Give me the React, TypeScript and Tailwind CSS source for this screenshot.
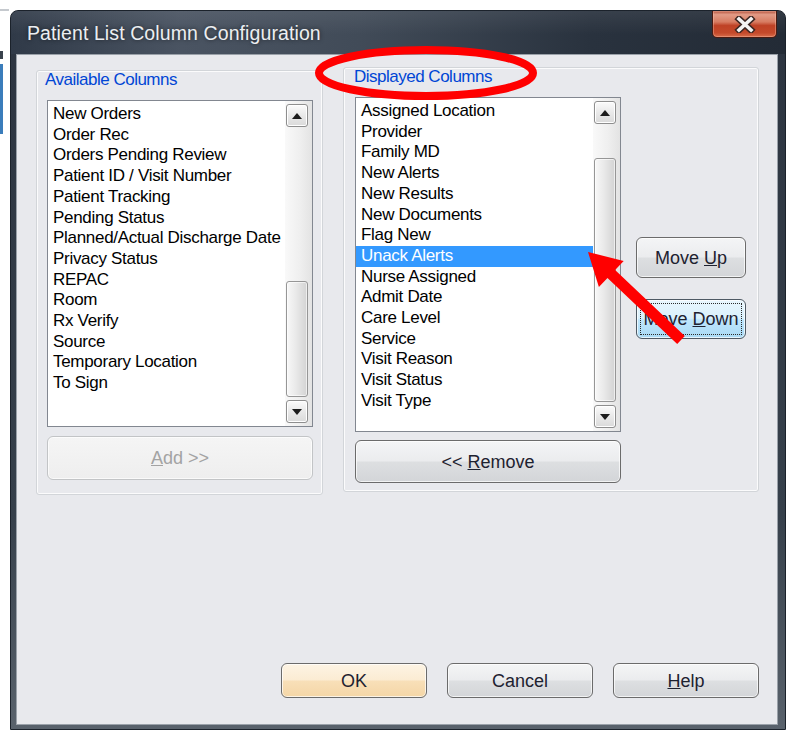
import type { ReactNode } from "react"

const availableColumns = [
  "New Orders",
  "Order Rec",
  "Orders Pending Review",
  "Patient ID / Visit Number",
  "Patient Tracking",
  "Pending Status",
  "Planned/Actual Discharge Date",
  "Privacy Status",
  "REPAC",
  "Room",
  "Rx Verify",
  "Source",
  "Temporary Location",
  "To Sign",
]

const displayedColumns = [
  "Assigned Location",
  "Provider",
  "Family MD",
  "New Alerts",
  "New Results",
  "New Documents",
  "Flag New",
  "Unack Alerts",
  "Nurse Assigned",
  "Admit Date",
  "Care Level",
  "Service",
  "Visit Reason",
  "Visit Status",
  "Visit Type",
]

type ButtonVariant = "normal" | "default" | "focused" | "disabled"

const buttonStyles: Record<ButtonVariant, string> = {
  normal:
    "border-[#6b6b6b] text-[#1e2230] bg-[linear-gradient(to_bottom,#f4f5f6_0%,#ebecee_48%,#dddfe1_52%,#d3d5d8_100%)]",
  default:
    "border-[#6b6b6b] text-[#1e2230] bg-[linear-gradient(to_bottom,#fdf4e4_0%,#fbecd3_48%,#f8dfb8_52%,#f4d6a6_100%)]",
  focused:
    "border-[#4e5964] text-[#1e2230] bg-[linear-gradient(to_bottom,#e8f6fd_0%,#d9f0fc_48%,#bee6fd_52%,#a9daf5_100%)]",
  disabled: "border-[#c2c4c6] text-[#a3a3a3] bg-[linear-gradient(to_bottom,#f5f5f5,#eeeeee)]",
}

function Button({
  children,
  variant = "normal",
  className = "",
}: {
  children: ReactNode
  variant?: ButtonVariant
  className?: string
}) {
  return (
    <div
      className={`flex shrink-0 rounded-[6px] border shadow-[inset_0_0_0_1px_rgba(255,255,255,0.7)] text-[18px] leading-none ${buttonStyles[variant]} ${className}`}
    >
      {variant === "focused" ? (
        <div className="m-[3px] flex flex-1 items-center justify-center overflow-hidden whitespace-nowrap border border-dotted border-[#2b2b2b]">
          {children}
        </div>
      ) : (
        <div className="flex flex-1 items-center justify-center whitespace-nowrap">{children}</div>
      )}
    </div>
  )
}

function ScrollArrow({ dir }: { dir: "up" | "down" }) {
  return (
    <div className="flex h-[23px] w-[22px] shrink-0 items-center justify-center rounded-[3px] border border-[#8e8e8e] bg-[linear-gradient(to_bottom,#fbfbfb,#e9e9e9_50%,#dadada)] shadow-[inset_0_0_0_1px_#ffffff]">
      <svg width="10" height="6" viewBox="0 0 10 6">
        <path d={dir === "up" ? "M0 6L5 0L10 6Z" : "M0 0L5 6L10 0Z"} fill="#1c1c1c" />
      </svg>
    </div>
  )
}

function ScrollBar({ thumb }: { thumb: string }) {
  return (
    <div className="flex w-[27px] shrink-0 flex-col pl-[1px] pt-[3px] pb-[3px] bg-[linear-gradient(to_right,#f9f9f9,#efefef_55%,#e3e3e3)]">
      <ScrollArrow dir="up" />
      <div
        className={`w-[22px] rounded-[3px] border border-[#969696] bg-[linear-gradient(to_right,#f8f8f8,#e9e9e9_45%,#d3d3d3)] shadow-[inset_0_0_0_1px_rgba(255,255,255,0.6)] ${thumb}`}
      />
      <div className="flex-1" />
      <ScrollArrow dir="down" />
    </div>
  )
}

function ListBox({
  items,
  selected,
  thumb,
  className,
}: {
  items: string[]
  selected?: string
  thumb: string
  className: string
}) {
  return (
    <div className={`flex border border-[#828790] bg-white ${className}`}>
      <div className="flex-1 pt-[3px] text-[17px] leading-[20.7px] tracking-[-0.3px] text-black">
        {items.map((item) => (
          <div
            key={item}
            className={item === selected ? "bg-[#3399ff] pl-[5px] text-white" : "pl-[5px]"}
          >
            {item}
          </div>
        ))}
      </div>
      <ScrollBar thumb={thumb} />
    </div>
  )
}

function GroupLabel({ children, className }: { children: ReactNode; className: string }) {
  return (
    <div className={`h-[18px] text-[17px] leading-[18px] tracking-[-0.5px] text-[#0046d5] ${className}`}>
      {children}
    </div>
  )
}

function CloseButton() {
  return (
    <div className="mr-[8px] flex h-[27px] w-[65px] items-center justify-center rounded-b-[5px] border border-t-0 border-[#4a1a10] shadow-[inset_0_0_0_1px_rgba(255,210,190,0.35)] bg-[linear-gradient(to_bottom,#b4513c_0%,#e19b86_14%,#d77c62_42%,#bf4226_56%,#c44a2b_84%,#d86c4a_100%)]">
      <svg width="22" height="17" viewBox="0 0 22 17">
        <path d="M5 3L17 14M17 3L5 14" stroke="#3b2622" strokeWidth="6.5" strokeLinecap="square" />
        <path d="M5 3L17 14M17 3L5 14" stroke="#f4f4f4" strokeWidth="3.6" strokeLinecap="square" />
      </svg>
    </div>
  )
}

export default function App() {
  return (
    <div className="relative flex h-[730px] w-[786px] overflow-hidden bg-white font-['Liberation_Sans',Arial,sans-serif]">
      {/* edge of the app window sitting behind the dialog */}
      <div className="flex w-[10px] shrink-0 flex-col">
        <div className="mt-[9px] h-[2px] w-[9px] bg-[#c5c9ce]" />
        <div className="mt-[40px] h-[8px] w-[3px] bg-[#39424d]" />
        <div className="mt-[5px] h-[70px] w-[3px] bg-[#3b7dbb]" />
      </div>

      <div className="mt-[10px] flex h-[720px] w-[776px] flex-col rounded-t-[8px] border border-[#1b222b] bg-[linear-gradient(to_bottom,#2c3440,#36404b_70%,#59626c)]">
        {/* title bar */}
        <div className="flex h-[43px] shrink-0 items-start justify-between rounded-t-[7px] bg-[linear-gradient(to_bottom,rgba(255,255,255,0.07),rgba(255,255,255,0)_55%),linear-gradient(to_right,#303a48_0%,#4a5462_22%,#414b58_45%,#29323e_75%,#232b36_100%)]">
          <div className="pl-[16px] pt-[10px] text-[19.5px] leading-[24px] tracking-[0.1px] text-[#eceef1] [text-shadow:0_0_4px_rgba(0,0,0,0.6)]">
            Patient List Column Configuration
          </div>
          <CloseButton />
        </div>

        {/* client area */}
        <div className="flex flex-1 pl-[5px] pr-[7px] pb-[4px]">
          <div className="flex flex-1 flex-col border border-[#9aa1a9] bg-[#e8e9ed]">
            <div className="flex items-start gap-[20px] pl-[19px]">
              {/* Available Columns */}
              <div className="mt-[15px] flex h-[425px] w-[287px] flex-col rounded-[3px] border border-[#d2d5d9] shadow-[inset_0_0_0_1px_rgba(255,255,255,0.8)]">
                <GroupLabel className="ml-[8px]">Available Columns</GroupLabel>
                <ListBox
                  items={availableColumns}
                  thumb="mt-[154px] h-[116px]"
                  className="ml-[10px] mt-[11px] h-[327px] w-[266px]"
                />
                <Button variant="disabled" className="ml-[10px] mt-[9px] h-[44px] w-[266px]">
                  <span>
                    <u>A</u>dd &gt;&gt;
                  </span>
                </Button>
              </div>

              {/* Displayed Columns */}
              <div className="mt-[12px] flex h-[425px] w-[416px] flex-col rounded-[3px] border border-[#d2d5d9] shadow-[inset_0_0_0_1px_rgba(255,255,255,0.8)]">
                <GroupLabel className="ml-[10px]">Displayed Columns</GroupLabel>
                <div className="ml-[11px] mt-[11px] flex gap-[15px]">
                  <div className="flex flex-col">
                    <ListBox
                      items={displayedColumns}
                      selected="Unack Alerts"
                      thumb="mt-[34px] h-[244px]"
                      className="h-[335px] w-[266px]"
                    />
                    <Button className="mt-[8px] h-[43px] w-[266px]">
                      <span>
                        &lt;&lt; <u>R</u>emove
                      </span>
                    </Button>
                  </div>
                  <div className="flex flex-col gap-[21px] pt-[140px]">
                    <Button className="h-[41px] w-[110px]">
                      <span>
                        Move <u>U</u>p
                      </span>
                    </Button>
                    <Button variant="focused" className="h-[40px] w-[110px]">
                      <span>
                        Move <u>D</u>own
                      </span>
                    </Button>
                  </div>
                </div>
              </div>
            </div>

            <div className="flex-1" />

            <div className="flex justify-end gap-[20px] pr-[18px] pb-[26px]">
              <Button variant="default" className="h-[35px] w-[146px]">
                OK
              </Button>
              <Button className="h-[35px] w-[146px]">Cancel</Button>
              <Button className="h-[35px] w-[146px]">
                <span>
                  <u>H</u>elp
                </span>
              </Button>
            </div>
          </div>
        </div>
      </div>

      {/* red markup drawn over the dialog */}
      <svg className="pointer-events-none absolute left-0 top-0" width="786" height="730" viewBox="0 0 786 730">
        <ellipse cx="426" cy="73" rx="107" ry="23" fill="none" stroke="#ff0000" strokeWidth="8" />
        <polygon
          points="588,252 623.7,260.9 615.1,270 684.8,336 677.2,344 607.5,278 598.9,287.1"
          fill="#ff0000"
        />
      </svg>
    </div>
  )
}
